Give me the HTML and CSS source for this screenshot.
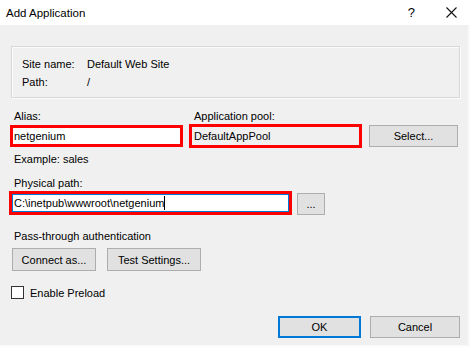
FILE: index.html
```html
<!DOCTYPE html>
<html lang="en">
<head>
  <meta charset="UTF-8" />
  <title>Add Application</title>
  <link rel="stylesheet" href="styles.css">
</head>
<body>
  <div class="dialog">
    <!-- タイトルバー -->
    <div class="titlebar">
      <span class="title">Add Application</span>
      <span class="help">?</span>
      <svg class="close" width="11" height="11" viewBox="0 0 11 11">
        <path d="M0.5 0.5 L10.5 10.5 M10.5 0.5 L0.5 10.5" stroke="#111" stroke-width="1.1" fill="none"/>
      </svg>
    </div>

    <div class="content">
      <div class="group">
        <div class="info-row"><span class="info-label">Site name:</span><span>Default Web Site</span></div>
        <div class="info-row"><span class="info-label">Path:</span><span>/</span></div>
      </div>

      <div class="fields">
        <div class="label">Alias:</div>
        <div class="label pool-label">Application pool:</div>
        <div></div>
        <div class="marked alias-box"><div class="textbox">netgenium</div></div>
        <div class="marked pool-box"><div class="textbox readonly">DefaultAppPool</div></div>
        <button class="btn select-btn">Select...</button>
      </div>

      <div class="hint">Example: sales</div>

      <div class="label path-label">Physical path:</div>
      <div class="path-row">
        <div class="marked path-box"><div class="textbox focused">C:\inetpub\wwwroot\netgenium<span class="caret"></span></div></div>
        <button class="btn browse-btn">...</button>
      </div>

      <div class="label auth-label">Pass-through authentication</div>
      <div class="auth-row">
        <button class="btn connect-btn">Connect as...</button>
        <button class="btn test-btn">Test Settings...</button>
      </div>

      <label class="check-row"><span class="checkbox"></span>Enable Preload</label>

      <div class="footer">
        <button class="btn ok-btn">OK</button>
        <button class="btn cancel-btn">Cancel</button>
      </div>
    </div>
  </div>
</body>
</html>
```

FILE: styles.css
```css
/*── 全体 ──*/
body {
  margin: 0;
  font-family: "Liberation Sans", Arial, sans-serif;
  font-size: 11px;
  color: #000;
  background: #fff;
}
.dialog {
  width: 470px;
  height: 347px;
  display: flex;
  flex-direction: column;
  box-sizing: border-box;
}
/*── タイトルバー ──*/
.titlebar {
  height: 25px;
  flex: none;
  display: flex;
  align-items: center;
  padding-left: 6px;
  background: #fff;
}
.title {
  flex: 1;
  font-size: 11.5px;
  color: #000;
}
.help {
  margin-right: 31px;
  font-size: 13px;
}
.close {
  margin-right: 13px;
}
/*── 本体 ──*/
.content {
  flex: 1;
  background: #f0f0f0;
  border-right: 2px solid #fafafa;
  border-bottom: 2px solid #fafafa;
  padding: 21px 8px 0 10px;
  box-sizing: border-box;
}
.group {
  margin-left: 1px;
  height: 52px;
  border: 1px solid #d8d8d8;
  box-shadow: 1px 1px 0 #fcfcfc, inset 1px 1px 0 #fcfcfc;
  padding: 8px 10px 0;
  box-sizing: border-box;
}
.info-row {
  display: flex;
  height: 18px;
  line-height: 18px;
}
.info-label {
  width: 65px;
}
.label {
  height: 16px;
  line-height: 16px;
  padding-left: 4px;
}
.fields {
  display: grid;
  grid-template-columns: 173px 173px 89px;
  grid-template-rows: 16px 24px;
  column-gap: 6px;
  row-gap: 0;
  margin-top: 10px;
  align-items: center;
}
.pool-label {
  padding-left: 5px;
}
.marked {
  border: 3px solid #f00;
  box-sizing: border-box;
  height: 24px;
}
.alias-box {
  height: 22px;
}
.textbox {
  height: 100%;
  box-sizing: border-box;
  background: #fff;
  line-height: 17px;
  padding-left: 1px;
  white-space: nowrap;
  overflow: hidden;
}
.pool-box .textbox {
  line-height: 18px;
}
.textbox.readonly {
  background: #f0f0f0;
  padding-left: 2px;
}
.textbox.focused {
  border: 1px solid #0078d7;
  line-height: 16px;
}
.caret {
  display: inline-block;
  width: 1px;
  height: 14px;
  background: #000;
  vertical-align: -3px;
}
.btn {
  font-family: inherit;
  font-size: 11px;
  color: #000;
  background: #e1e1e1;
  border: 1px solid #adadad;
  height: 23px;
  padding: 0;
  margin: 0;
  box-sizing: border-box;
}
.select-btn {
  height: 22px;
  width: 89px;
  margin-left: 1px;
}
.hint {
  margin-top: 3px;
  height: 16px;
  line-height: 16px;
  padding-left: 4px;
}
.path-label {
  margin-top: 8px;
}
.path-row {
  display: flex;
  align-items: center;
  gap: 5px;
  margin-left: -1px;
}
.path-box {
  width: 283px;
}
.browse-btn {
  width: 28px;
  height: 22px;
  margin-top: 2px;
}
.auth-label {
  margin-top: 13px;
}
.auth-row {
  display: flex;
  gap: 11px;
  margin-top: 4px;
  padding-left: 2px;
}
.connect-btn {
  width: 84px;
}
.test-btn {
  width: 94px;
}
.check-row {
  display: flex;
  align-items: center;
  margin-top: 15px;
  margin-left: 1px;
  height: 13px;
}
.checkbox {
  width: 13px;
  height: 13px;
  box-sizing: border-box;
  border: 1px solid #333;
  background: #fff;
  margin-right: 6px;
}
.footer {
  display: flex;
  justify-content: flex-end;
  gap: 9px;
  margin-top: 17px;
  padding-right: 0;
}
.ok-btn {
  width: 83px;
  height: 22px;
  border: 1px solid #0078d7;
  box-shadow: inset 0 0 0 1px #0078d7;
}
.cancel-btn {
  width: 90px;
  height: 22px;
}
```
